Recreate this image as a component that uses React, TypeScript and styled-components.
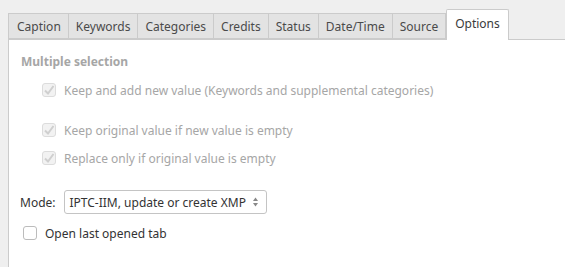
import * as React from "react";
import styled, { createGlobalStyle } from "styled-components";

const Global = createGlobalStyle`
  html, body {
    margin: 0;
    padding: 0;
    background: #efefef;
  }
  body {
    font-family: "Noto Sans", "DejaVu Sans", sans-serif;
    font-size: 12px;
    color: #333;
  }
`;

const Window = styled.div`
  width: 565px;
  height: 267px;
  display: flex;
  flex-direction: column;
  overflow: hidden;
  background: #efefef;
`;

const TabBar = styled.div`
  display: flex;
  align-items: flex-end;
  height: 39px;
  padding-left: 8px;
  box-sizing: border-box;
`;

const Tab = styled.div<{ $active?: boolean }>`
  box-sizing: border-box;
  height: ${p => (p.$active ? "31px" : "26px")};
  margin-bottom: ${p => (p.$active ? "-1px" : "0")};
  padding: 0 ${p => (p.$active ? "8px" : "7px")};
  display: flex;
  align-items: center;
  padding-bottom: ${p => (p.$active ? "4px" : "0")};
  background: ${p => (p.$active ? "#fff" : "#e3e3e3")};
  border: 1px solid #cbcbcb;
  border-bottom: ${p => (p.$active ? "none" : "1px solid #cbcbcb")};
  border-left: ${p => (p.$active ? "1px solid #cbcbcb" : "none")};
  border-radius: ${p => (p.$active ? "2px 2px 0 0" : "0")};
  color: ${p => (p.$active ? "#3a3a3a" : "#4a4a4a")};
  position: relative;
  z-index: ${p => (p.$active ? 1 : 0)};

  &:first-child {
    border-left: 1px solid #cbcbcb;
    padding-left: 8px;
  }
`;

const Panel = styled.div`
  flex: 1;
  margin-left: 8px;
  background: #fff;
  border-top: 1px solid #cbcbcb;
  border-left: 1px solid #cbcbcb;
  display: flex;
  flex-direction: column;
  padding: 13px 0 0 12px;
`;

const GroupTitle = styled.div`
  font-weight: bold;
  color: #a6a6a6;
  height: 18px;
  line-height: 18px;
`;

const CheckRow = styled.label<{ $indent?: number; $top?: number; $disabled?: boolean }>`
  display: flex;
  align-items: center;
  gap: 8px;
  height: 18px;
  margin-left: ${p => p.$indent ?? 0}px;
  margin-top: ${p => p.$top ?? 0}px;
  color: ${p => (p.$disabled ? "#a6a6a6" : "#333")};
`;

const Box = styled.span<{ $disabled?: boolean }>`
  box-sizing: border-box;
  width: 14px;
  height: 14px;
  border: 1px solid ${p => (p.$disabled ? "#dcdcdc" : "#bcbcbc")};
  border-radius: 3px;
  background: ${p => (p.$disabled ? "#f2f2f2" : "#fff")};
  display: flex;
  align-items: center;
  justify-content: center;
  flex: none;
`;

const ModeRow = styled.div`
  display: flex;
  align-items: center;
  gap: 8px;
  margin-top: 23px;
  margin-left: -1px;
`;

const Combo = styled.div`
  box-sizing: border-box;
  width: 203px;
  height: 24px;
  border: 1px solid #c4c4c4;
  border-radius: 3px;
  display: flex;
  align-items: center;
  justify-content: space-between;
  padding: 0 7px 0 5px;
  color: #333;
`;

const Check = () => (
  <svg width="12" height="12" viewBox="0 0 12 12">
    <path d="M2 6.5 L5 9.5 L10.5 2" fill="none" stroke="#cfcfcf" strokeWidth="2" />
  </svg>
);

const Spin = () => (
  <svg width="7" height="12" viewBox="0 0 7 12">
    <path d="M3.5 1.5 L6 5 L1 5 Z" fill="#888" />
    <path d="M3.5 10.5 L6 7 L1 7 Z" fill="#888" />
  </svg>
);

const tabs = ["Caption", "Keywords", "Categories", "Credits", "Status", "Date/Time", "Source", "Options"];

export default function App() {
  return (
    <Window>
      <Global />
      <TabBar>
        {tabs.map(t => (
          <Tab key={t} $active={t === "Options"}>{t}</Tab>
        ))}
      </TabBar>
      <Panel>
        <GroupTitle>Multiple selection</GroupTitle>
        <CheckRow $indent={21} $top={10} $disabled>
          <Box $disabled><Check /></Box>
          Keep and add new value (Keywords and supplemental categories)
        </CheckRow>
        <CheckRow $indent={21} $top={22} $disabled>
          <Box $disabled><Check /></Box>
          Keep original value if new value is empty
        </CheckRow>
        <CheckRow $indent={21} $top={10} $disabled>
          <Box $disabled><Check /></Box>
          Replace only if original value is empty
        </CheckRow>
        <ModeRow>
          <span>Mode:</span>
          <Combo>
            <span>IPTC-IIM, update or create XMP</span>
            <Spin />
          </Combo>
        </ModeRow>
        <CheckRow $indent={2} $top={10}>
          <Box />
          Open last opened tab
        </CheckRow>
      </Panel>
    </Window>
  );
}
